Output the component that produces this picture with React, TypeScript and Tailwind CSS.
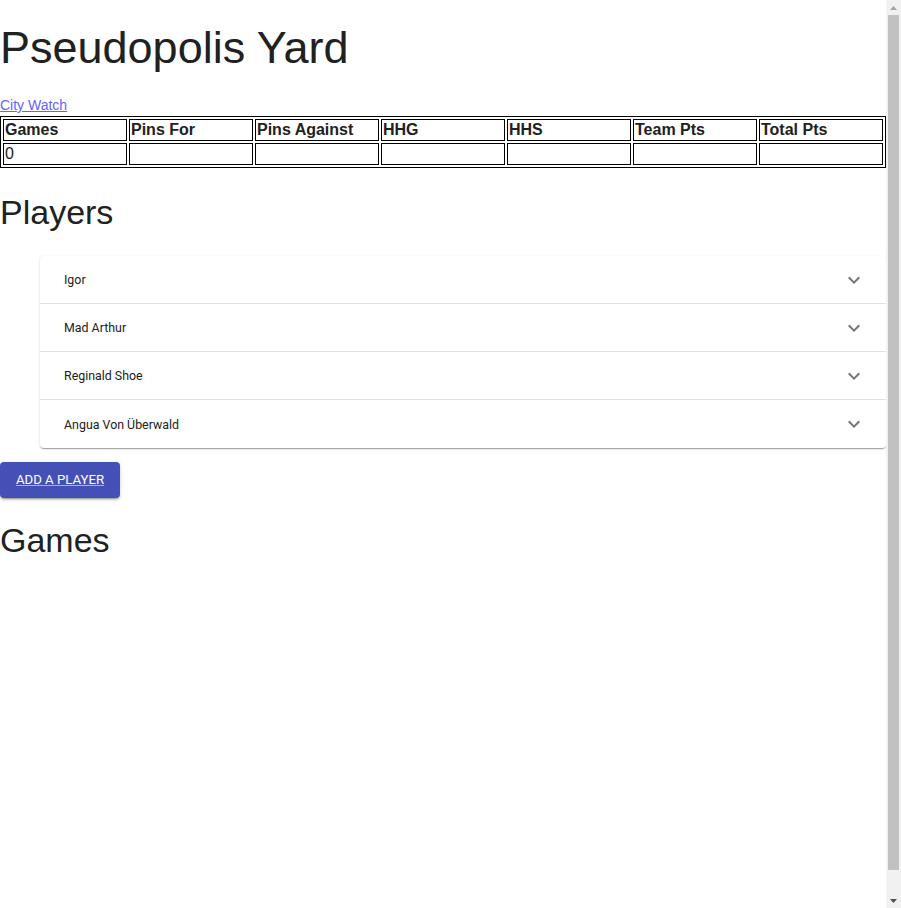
import React from 'react';

const columns = ['Games', 'Pins For', 'Pins Against', 'HHG', 'HHS', 'Team Pts', 'Total Pts'];
const stats = ['0', '', '', '', '', '', ''];
const players = ['Igor', 'Mad Arthur', 'Reginald Shoe', 'Angua Von Überwald'];

const ExpandMore: React.FC = () => (
  <svg viewBox="0 0 24 24" className="w-6 h-6" fill="rgba(0,0,0,0.54)">
    <path d="M16.59 8.59L12 13.17 7.41 8.59 6 10l6 6 6-6z" />
  </svg>
);

// window scrollbar as it shows in the screenshot
const Scrollbar: React.FC = () => (
  <div className="w-[15px] shrink-0 bg-[#f1f1f1] flex flex-col">
    <div className="h-[15px] flex items-center justify-center">
      <svg width="7" height="4" viewBox="0 0 7 4" fill="#a3a3a3">
        <path d="M3.5 0L7 4H0z" />
      </svg>
    </div>
    <div className="mx-[2px] h-[855px] bg-[#c1c1c1]" />
    <div className="flex-1" />
    <div className="h-[15px] flex items-center justify-center">
      <svg width="7" height="4" viewBox="0 0 7 4" fill="#505050">
        <path d="M0 0h7L3.5 4z" />
      </svg>
    </div>
  </div>
);

const App: React.FC = () => {
  return (
    <div className="flex h-screen overflow-hidden bg-white">
      <div className="flex-1 min-w-0 text-[#212121] font-['Liberation_Sans',Arial,sans-serif]">
        <h1 className="pt-[22px] text-[45px] leading-[52px] font-normal">Pseudopolis Yard</h1>

        <div className="mt-[21px] text-[14px] leading-[20px]">
          <a href="#" className="text-[#6363ff] underline">City Watch</a>
        </div>

        {/* Team stats */}
        <table className="mt-[1px] w-full table-fixed border border-black border-separate border-spacing-[2px] text-[16px] leading-[18px]">
          <thead>
            <tr>
              {columns.map(col => (
                <th key={col} className="border border-black p-px text-left font-bold">{col}</th>
              ))}
            </tr>
          </thead>
          <tbody>
            <tr>
              {stats.map((val, i) => (
                <td key={i} className="border border-black p-px h-[22px]">{val}</td>
              ))}
            </tr>
          </tbody>
        </table>

        <h2 className="mt-[23px] text-[34px] leading-[42px] font-normal">Players</h2>

        <div className="mt-[23px] ml-10 bg-white rounded-[4px] shadow-[0_2px_1px_-1px_rgba(0,0,0,0.2),0_1px_1px_0_rgba(0,0,0,0.14),0_1px_3px_0_rgba(0,0,0,0.12)] font-['Roboto',sans-serif]">
          {players.map((name, i) => (
            <div
              key={name}
              className={`h-12 flex items-center justify-between pl-6 pr-5 text-[12.4px] ${i < players.length - 1 ? 'border-b border-black/[0.12]' : ''}`}
            >
              <span className="pt-[2px]">{name}</span>
              <ExpandMore />
            </div>
          ))}
        </div>

        <button className="mt-[14px] h-9 w-[120px] rounded-[4px] bg-[#4550b7] text-white text-[13.2px] font-['Roboto',sans-serif] uppercase underline decoration-[#a9a9ff] shadow-[0_3px_1px_-2px_rgba(0,0,0,0.2),0_2px_2px_0_rgba(0,0,0,0.14),0_1px_5px_0_rgba(0,0,0,0.12)]">
          Add a player
        </button>

        <h2 className="mt-[21px] text-[34px] leading-[42px] font-normal">Games</h2>
      </div>
      <Scrollbar />
    </div>
  );
};

export default App;
